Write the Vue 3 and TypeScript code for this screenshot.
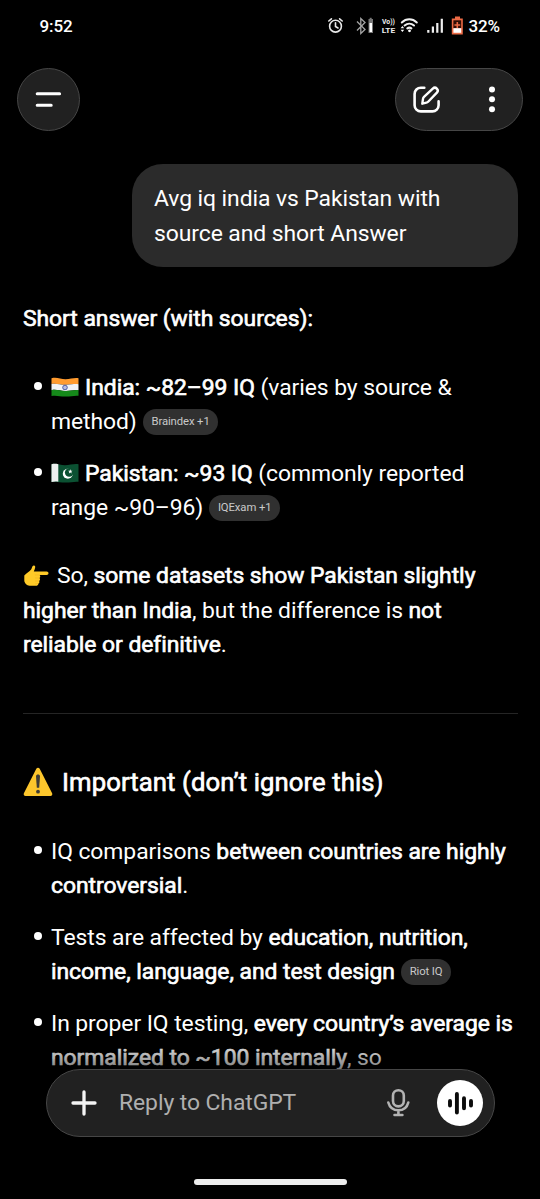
<script setup lang="ts">
interface Run { text: string; bold?: boolean; chip?: boolean; icon?: string }
type Line = Run[]

const ranges: Line[][] = [
  [
    [{ text: '', icon: 'india' }, { text: 'India: ~82–99 IQ', bold: true }, { text: ' (varies by source &' }],
    [{ text: 'method)' }, { text: 'Braindex +1', chip: true }],
  ],
  [
    [{ text: '', icon: 'pakistan' }, { text: 'Pakistan: ~93 IQ', bold: true }, { text: ' (commonly reported' }],
    [{ text: 'range ~90–96)' }, { text: 'IQExam +1', chip: true }],
  ],
]
const notes: Line[][] = [
  [
    [{ text: 'IQ comparisons ' }, { text: 'between countries are highly', bold: true }],
    [{ text: 'controversial', bold: true }, { text: '.' }],
  ],
  [
    [{ text: 'Tests are affected by ' }, { text: 'education, nutrition,', bold: true }],
    [{ text: 'income, language, and test design', bold: true }, { text: 'Riot IQ', chip: true }],
  ],
  [
    [{ text: 'In proper IQ testing, ' }, { text: 'every country’s average is', bold: true }],
    [{ text: 'normalized to ~100 internally', bold: true }, { text: ', so' }],
  ],
]
const lists = [ranges, notes]
</script>

<template>
  <div class="screen">
    <header class="status">
      <span class="clock">9:52</span>
      <svg class="status-icons" width="148" height="24" viewBox="322 14 148 24" fill="none">
        <g stroke="#e8e8e8" stroke-width="1.6" stroke-linecap="round">
          <circle cx="335.5" cy="26.2" r="5.9" />
          <path d="M335.5 22.8v3.7l2.5 1.5M328.8 21l2.6-2.2M342.2 21l-2.6-2.2" />
        </g>
        <path d="M357 21.5l8 8-4.2 4V18.5l4.2 4-8 8" stroke="#a5a5a5" stroke-width="1.3" />
        <path d="M368.5 19h4.5v14h-4.5z" fill="#777" />
        <path d="M369.7 17.8h2v1.5h-2z" fill="#777" />
        <path d="M369.5 23h2.5v9h-2.5z" fill="#fff" />
        <text x="382" y="24.2" class="volte" textLength="13" lengthAdjust="spacingAndGlyphs">Vo))</text>
        <text x="381.8" y="32.8" class="volte lte" textLength="13.4" lengthAdjust="spacingAndGlyphs">LTE</text>
        <g stroke="#f2f2f2" stroke-width="2" stroke-linecap="round">
          <path d="M401.8 22.5c4.4-4.2 10.6-4.2 15 0M404.6 25.5c2.8-2.5 6.6-2.5 9.4 0M407.3 28.4c1.4-1 2.8-1 4.1 0" />
        </g>
        <circle cx="409.5" cy="30.8" r="1.4" fill="#fff" />
        <path d="M400.6 28.3l1.8-2.3 1.8 2.3zM400.6 29.7l1.8 2.3 1.8-2.3z" fill="#fff" />
        <path d="M427.2 30h2.2v2.8h-2.2zM431.8 26.5h2.2v6.3h-2.2zM436.2 23h2.2v9.8h-2.2zM440.7 18.8h2.2v14h-2.2z" fill="#eee" />
        <path d="M455 16.5h5v2h2.8v16h-11v-16h3.2z" fill="#ec6a45" />
        <path d="M453.4 20.3h7.8v8h-7.8z" fill="#2e0d05" />
        <path d="M453.4 28.2h7.8v4.6h-7.8z" fill="#fff" />
        <path d="M457.3 22v6M454.4 25h5.8" stroke="#ec6a45" stroke-width="1.6" />
      </svg>
      <span class="percent">32%</span>
    </header>

    <nav class="toolbar">
      <button class="round" aria-label="Menu">
        <svg width="62" height="62" viewBox="18 69 62 62"><path d="M37.2 93.8h22.4M37.2 105.2h14" stroke="#fff" stroke-width="3" stroke-linecap="round" /></svg>
      </button>
      <div class="actions">
        <svg width="126" height="62" viewBox="396 69 126 62" fill="none">
          <path d="M424.3 87.7h-3.5a6.2 6.2 0 0 0-6.2 6.2v11.3a6.2 6.2 0 0 0 6.2 6.2h11.6a6.2 6.2 0 0 0 6.2-6.2v-3.8" stroke="#fff" stroke-width="2.6" stroke-linecap="round" />
          <path d="M422.3 103.7l.7-4.8c.1-.8.5-1.5 1-2l8.8-8.3a2.9 2.9 0 0 1 4.1 4.1l-8.5 8.8c-.6.6-1.2 1-2 1.1z" stroke="#fff" stroke-width="2.4" stroke-linejoin="round" />
          <g fill="#fff"><circle cx="492" cy="89.5" r="3" /><circle cx="492" cy="99.2" r="3" /><circle cx="492" cy="109.2" r="3" /></g>
        </svg>
      </div>
    </nav>

    <main class="chat">
      <div class="bubble">Avg iq india vs Pakistan with<br />source and short Answer</div>
      <p class="lead"><b>Short answer (with sources):</b></p>

      <template v-for="(list, n) in lists" :key="n">
        <ul>
          <li v-for="(item, i) in list" :key="i">
            <div v-for="(line, j) in item" :key="j" class="line">
              <template v-for="(run, k) in line" :key="k">
                <svg v-if="run.icon === 'india'" class="flag" width="28" height="20" viewBox="0 0 28 20">
                  <path d="M.5 1.3c5-1.6 9 .9 14 .9S23 .5 27.5 1.2v6C23 6.7 19 8 14 7.8S5 6 .5 7z" fill="#ff9b2f" />
                  <path d="M.5 7c4.5-1 8.5.6 13.5.8S23 6.7 27.5 7.2v6c-4.5-.5-8.5 1-13.5.8S5 12.2.5 13.2z" fill="#f1f3f6" />
                  <path d="M.5 13.2c4.5-1 8.5.6 13.5.8s9-1.3 13.5-.8v5.6c-4.5-.5-8.5 1-13.5.8s-9-1.6-13.5-.6z" fill="#15891a" />
                  <circle cx="14" cy="10.5" r="2.3" fill="#b9bddf" stroke="#40509e" stroke-width=".9" />
                </svg>
                <svg v-else-if="run.icon === 'pakistan'" class="flag" width="28" height="20" viewBox="0 0 28 20">
                  <path d="M.5 1.3C5-.3 9 2.2 14 2.2s8.5-1.7 13.5-1v17.6c-4.5-.5-8.5 1-13.5.8s-9-1.6-13.5-.6z" fill="#0b5132" />
                  <path d="M.5 1.3C3 .5 5 .7 7.3 1.2v17.5C5 18.2 3 18.4.5 19z" fill="#eef0f0" />
                  <circle cx="16.8" cy="10.8" r="5" fill="#fff" />
                  <circle cx="18.2" cy="9.5" r="4.3" fill="#0b5132" />
                  <path d="M19.3 6.2l.6 1.5h1.6l-1.2 1.1.4 1.6-1.4-.9-1.4.9.4-1.6-1.2-1.1h1.6z" fill="#fff" />
                </svg>
                <span v-else-if="run.chip" class="chip">{{ run.text }}</span>
                <b v-else-if="run.bold">{{ run.text }}</b>
                <span v-else>{{ run.text }}</span>
              </template>
            </div>
          </li>
        </ul>

        <template v-if="n === 0">
          <div class="verdict">
            <div class="line">
              <svg class="hand" width="27" height="22" viewBox="0 0 27 22">
                <path d="M1.3 10.5C3 8.2 6.5 6.7 8.3 4.2L9.5 1.3c.9-1.5 3-.7 2.7 1-.2 1.5-.9 2.8-1.4 4.2h12.8c2.5 0 2.5 3.5 0 3.5h-7c1 1 .8 2.3-.1 3 .9 1 .6 2.4-.4 3 .6 1 .3 2.3-.8 2.7 0 1.5-1.1 2-2.5 2H6.5c-2.5 0-5.2-2.7-5.2-5.2z" fill="#ffca28" />
                <path d="M16.6 10h-4.7M16.5 13h-4.5M16 16h-4M15.3 18.7h-3" stroke="#f0ae20" stroke-width=".6" />
              </svg>
              <span>So, </span><b>some datasets show Pakistan slightly</b>
            </div>
            <div class="line"><b>higher than India</b><span>, but the difference is </span><b>not</b></div>
            <div class="line"><b>reliable or definitive</b><span>.</span></div>
          </div>
          <hr />
          <h2>
            <svg width="30" height="30" viewBox="0 0 30 30">
              <path d="M13.3 1.7c.8-1.4 2.6-1.4 3.4 0L29 26c.8 1.5.1 3-1.6 3H2.6C.9 29 .2 27.5 1 26z" fill="#fcc62c" />
              <path d="M13 9.2c0-2.3 4-2.3 4 0l-.8 11.5h-2.4z" fill="#3d3b35" />
              <circle cx="15" cy="24.7" r="1.9" fill="#3d3b35" />
            </svg>
            <span>Important (don’t ignore this)</span>
          </h2>
        </template>
      </template>
    </main>

    <footer class="dock">
      <div class="composer">
        <svg class="plus" width="26" height="26" viewBox="0 0 26 26"><path d="M13 2v22M2 13h22" stroke="#f4f4f4" stroke-width="3.3" stroke-linecap="round" /></svg>
        <span class="placeholder">Reply to ChatGPT</span>
        <svg class="mic" width="24" height="30" viewBox="0 0 24 30" fill="none" stroke="#b2b2b2" stroke-width="2.6" stroke-linecap="round">
          <rect x="7" y="2.2" width="10.8" height="16.2" rx="5.4" />
          <path d="M2.3 14.5c1.3 4.7 5.2 7.8 10.1 7.8s8.7-3.1 9.9-7.8M12.4 22.3v4.5M8.5 27h7.9" />
        </svg>
        <div class="voice">
          <svg width="46" height="46" viewBox="0 0 46 46"><path d="M13 21v4.6M19.9 14v18.5M27 18.3v10M34 21v4.6" stroke="#0b0b0b" stroke-width="3.9" stroke-linecap="round" /></svg>
        </div>
      </div>
      <div class="home"></div>
    </footer>
  </div>
</template>

<style>
html, body { background: #000; }
</style>

<style scoped>
.screen {
  position: relative;
  width: 540px;
  height: 1199px;
  overflow: hidden;
  background: #000;
  color: #fff;
  font-family: Roboto, "Noto Sans", sans-serif;
  font-size: 22.9px;
  line-height: 34.3px;
  letter-spacing: -0.07px;
}
.status { display: flex; height: 68px; padding: 14px 0 0 39.5px; box-sizing: border-box; font-size: 17px; line-height: 24px; letter-spacing: -0.1px; font-weight: 500; }
.clock { width: 282.5px; }
.status-icons { flex: none; }
.percent { margin-left: -1.5px; }
.volte { font: 700 7.5px Roboto, sans-serif; fill: #eee; letter-spacing: 0; }
.lte { font-size: 8px; }
.toolbar { display: flex; justify-content: space-between; height: 96px; padding: 0 17px; }
.round, .actions { box-sizing: border-box; height: 63px; border: 1px solid #464646; background: #212121; border-radius: 32px; padding: 0; overflow: hidden; }
.round { width: 63px; }
.actions { width: 128px; }
.round svg, .actions svg { display: block; }
.chat { padding: 0 22px 0 23px; }
.bubble { box-sizing: border-box; width: 386px; height: 103px; margin-left: 108.5px; padding: 18.4px 22.5px; border-radius: 31px; background: #2b2b2b; white-space: nowrap; }
p, ul, h2 { margin: 0; padding: 0; }
.lead { margin-top: 34.7px; }
b, h2 { font-weight: 400; -webkit-text-stroke: 0.65px #fff; letter-spacing: -0.05px; }
ul { list-style: none; margin-top: 35px; }
li { position: relative; padding-left: 28px; margin-bottom: 17.6px; }
li::before { content: ""; position: absolute; left: 10.8px; top: 11px; width: 8px; height: 8px; border-radius: 50%; background: #fff; }
.line { display: flex; align-items: center; height: 34.2px; line-height: 34.2px; white-space: pre; }
.flag { margin: 0 6px 1.5px 0; }
.chip { display: inline-block; height: 26px; margin-left: 6px; padding: 0 8.7px; border-radius: 13px; background: #303030; color: #c9c9c9; font-size: 11.3px; line-height: 26px; letter-spacing: -0.1px; }
.verdict { margin-top: 34px; }
.hand { margin-right: 7px; }
hr { height: 1px; margin: 51px 0 0; border: 0; background: #252525; }
h2 { display: flex; align-items: center; height: 38px; margin-top: 49px; font-size: 25.7px; letter-spacing: 0.08px; white-space: pre; }
h2 + ul { margin-top: 34.3px; }
h2 svg { margin-right: 9px; }
.dock { position: absolute; inset: 1030px 0 0; display: flex; flex-direction: column; align-items: center; padding-top: 39px; background: linear-gradient(to bottom, rgba(0, 0, 0, 0) 8px, rgba(0, 0, 0, 0.45) 36px, #000 60px); }
.composer { display: flex; align-items: center; box-sizing: border-box; width: 449px; height: 68px; border: 1px solid #464646; border-radius: 34px; background: #212121; padding: 0 11px 0 24.5px; }
.placeholder { margin-left: 22px; color: #afafaf; width: 267px; }
.voice { width: 46px; height: 46px; margin-left: auto; border-radius: 50%; background: #fff; }
.voice svg { display: block; }
.home { width: 153px; height: 6px; margin-top: 42px; border-radius: 3px; background: #ededed; }
</style>
